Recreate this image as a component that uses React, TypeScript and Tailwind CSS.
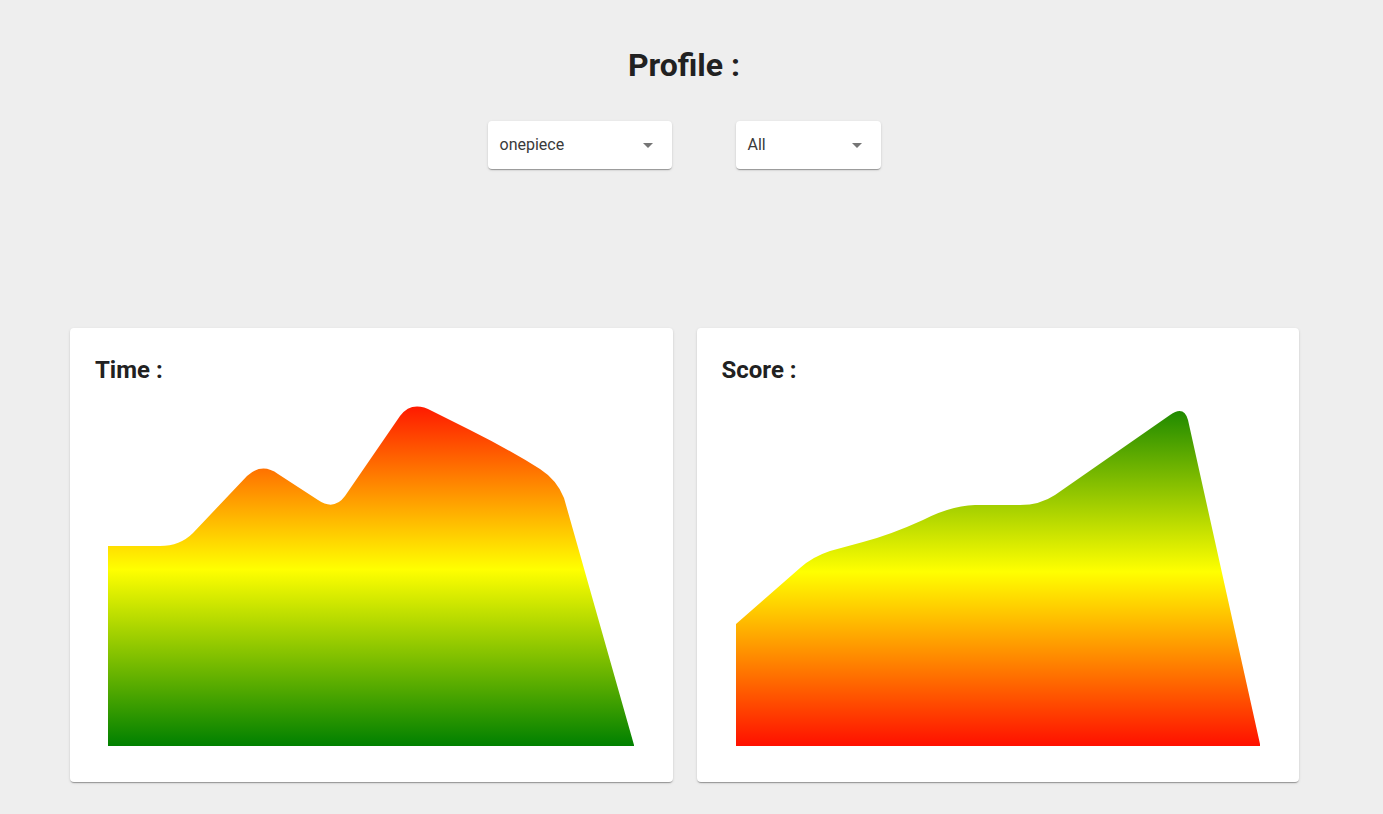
import React from "react";

const paperShadow =
  "shadow-[0px_2px_1px_-1px_rgba(0,0,0,0.2),0px_1px_1px_0px_rgba(0,0,0,0.14),0px_1px_3px_0px_rgba(0,0,0,0.12)]";

function Select({ value, width }: { value: string; width: string }) {
  return (
    <div
      className={`${width} h-12 bg-white rounded flex items-center justify-between pl-3 pr-[19px] ${paperShadow}`}
    >
      <span className="text-base text-[#3a3a3a]">{value}</span>
      <svg width="10" height="5" viewBox="0 0 10 5" className="block">
        <path d="M0 0 L5 5 L10 0 Z" fill="#757575" />
      </svg>
    </div>
  );
}

type ChartProps = {
  title: string;
  id: string;
  path: string;
  viewX: number;
  colors: [string, string, string];
};

function ChartCard({ title, id, path, viewX, colors }: ChartProps) {
  return (
    <div className={`bg-white rounded h-[454px] pt-[28px] px-[25px] ${paperShadow}`}>
      <h3 className="text-2xl leading-7 font-bold text-[#212121]">{title}</h3>
      <svg width="553" height="380" viewBox={`${viewX} 384 553 380`} className="block">
        <defs>
          <linearGradient id={id} x1="0" y1="0" x2="0" y2="1">
            <stop offset="0%" stopColor={colors[0]} />
            <stop offset="48%" stopColor={colors[1]} />
            <stop offset="100%" stopColor={colors[2]} />
          </linearGradient>
        </defs>
        <path d={path} fill={`url(#${id})`} />
      </svg>
    </div>
  );
}

const timePath =
  "M108,746 L108,546 L160,546 Q180,546 193,533 L247,476 Q262,462 278,474 L318,500 Q334,511 345,496 L400,416 Q412,400 432,411 L470,430 Q510,450 540,469 Q557,480 564,498 L634,745 L634,746 Z";

const scorePath =
  "M736,746 L736,624 L800,568 Q812,557 830,551 L863,542 Q890,535 923,520 Q950,506 975,505 L1020,505 Q1040,505 1055,495 L1170,415 Q1184,405 1188,420 L1260,744 L1260,746 Z";

export default function App() {
  return (
    <div className="min-h-screen bg-[#eeeeee] font-['Roboto',sans-serif]">
      <div className="w-[1368px] pt-[45px] pb-8">
        <h1 className="text-[32px] leading-10 font-bold text-[#212121] text-center">
          Profile :
        </h1>
        <div className="flex justify-center gap-16 mt-9">
          <Select value="onepiece" width="w-[184px]" />
          <Select value="All" width="w-[145px]" />
        </div>
        <div className="grid grid-cols-2 gap-6 pl-[70px] pr-[69px] mt-[159px]">
          <ChartCard
            title="Time :"
            id="timeGrad"
            path={timePath}
            viewX={95}
            colors={["#ff1a00", "#ffff00", "#008000"]}
          />
          <ChartCard
            title="Score :"
            id="scoreGrad"
            path={scorePath}
            viewX={722}
            colors={["#208a00", "#ffff00", "#ff1000"]}
          />
        </div>
      </div>
    </div>
  );
}
